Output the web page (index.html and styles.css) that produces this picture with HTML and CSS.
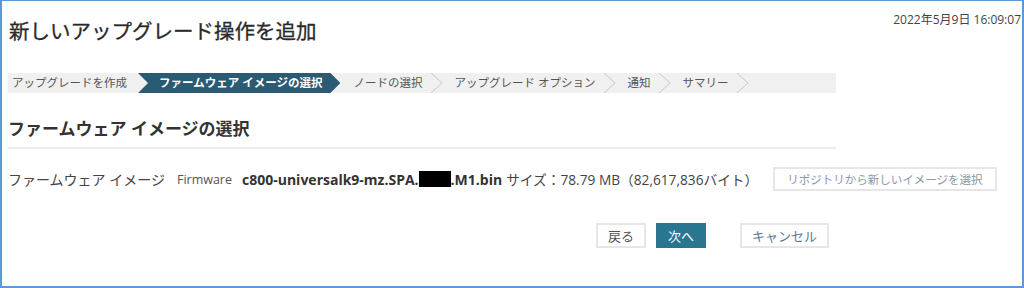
FILE: index.html
```html
<!DOCTYPE html>
<html lang="ja">
<head>
    <meta charset="UTF-8">
    <title>新しいアップグレード操作を追加</title>
    <link rel="stylesheet" href="styles.css">
</head>
<body>
    <div class="frame">
        <div class="header">
            <h1>新しいアップグレード操作を追加</h1>
            <div class="timestamp">2022年5月9日 16:09:07</div>
        </div>

        <div class="main">
            <div class="steps">
                <span class="step first">アップグレードを作成</span>
                <span class="step active">ファームウェア イメージの選択</span>
                <span class="step">ノードの選択</span>
                <svg class="sep" viewBox="0 0 11 20"><polyline points="0,0 11,10 0,20"/></svg>
                <span class="step">アップグレード オプション</span>
                <svg class="sep" viewBox="0 0 11 20"><polyline points="0,0 11,10 0,20"/></svg>
                <span class="step">通知</span>
                <svg class="sep" viewBox="0 0 11 20"><polyline points="0,0 11,10 0,20"/></svg>
                <span class="step">サマリー</span>
                <svg class="sep" viewBox="0 0 11 20"><polyline points="0,0 11,10 0,20"/></svg>
            </div>

            <h2 class="section-title">ファームウェア イメージの選択</h2>

            <div class="field-row">
                <span class="field-label">ファームウェア イメージ</span>
                <span class="fw-tag">Firmware</span>
                <span class="fw-name">c800-universalk9-mz.SPA.<span class="redacted"></span>.M1.bin</span>
                <span class="fw-size">サイズ：78.79 MB（82,617,836バイト）</span>
                <button class="btn btn-repo">リポジトリから新しいイメージを選択</button>
            </div>

            <div class="actions">
                <button class="btn">戻る</button>
                <button class="btn btn-primary">次へ</button>
                <button class="btn btn-cancel">キャンセル</button>
            </div>
        </div>
    </div>
</body>
</html>
```

FILE: styles.css
```css
body {
    margin: 0;
    font-family: "Open Sans", "Noto Sans CJK JP", sans-serif;
    color: #444;
    background-color: white;
}

.frame {
    width: 1024px;
    height: 288px;
    box-sizing: border-box;
    border: 2px solid #5b9bd5;
    border-top-width: 1px;
    overflow: hidden;
}

.header {
    display: flex;
    justify-content: space-between;
    align-items: flex-start;
    padding: 0 1px 0 7px;
}

h1 {
    margin: 16px 0 0 0;
    font-size: 20.5px;
    line-height: 28px;
    font-weight: normal;
    color: #2a2a2a;
    -webkit-text-stroke: 0.3px #2a2a2a;
}

.timestamp {
    margin-top: 11px;
    font-size: 12px;
    line-height: 16px;
    color: #444;
}

.main {
    width: 828px;
    margin-left: 6px;
}

/* wizard breadcrumb */
.steps {
    margin-top: 28px;
    height: 20px;
    display: flex;
    align-items: center;
    background-color: #f0f0f0;
    font-size: 11.5px;
    color: #555;
}

.step {
    line-height: 20px;
    padding: 0 9px 0 12px;
    white-space: nowrap;
}

.step.first {
    padding: 0 11px 0 4px;
}

.step.active {
    padding: 0 18px 0 21px;
    background-color: #2b5a73;
    color: white;
    font-weight: bold;
    clip-path: polygon(0 0, calc(100% - 10px) 0, 100% 50%, calc(100% - 10px) 100%, 0 100%, 10px 50%);
}

.step.active + .step {
    padding-left: 13px;
}

.sep {
    width: 11px;
    height: 20px;
    flex-shrink: 0;
}

.sep polyline {
    fill: none;
    stroke: #c8c8c8;
    stroke-width: 1;
}

.section-title {
    margin: 24px 0 0 0;
    padding-bottom: 6px;
    border-bottom: 2px solid #ececec;
    font-size: 17px;
    line-height: 24px;
    color: #333;
}

.field-row {
    margin-top: 18px;
    height: 24px;
    display: flex;
    align-items: center;
    white-space: nowrap;
}

.field-label {
    font-size: 14px;
    color: #444;
}

.fw-tag {
    margin-left: 12px;
    font-size: 12.5px;
    color: #555;
}

.fw-name {
    margin-left: 10px;
    font-size: 14px;
    font-weight: bold;
    color: #333;
    display: flex;
    align-items: center;
}

.redacted {
    display: inline-block;
    width: 32px;
    height: 16px;
    background-color: black;
}

.fw-size {
    margin-left: 4px;
    font-size: 13.7px;
    color: #444;
}

.btn {
    height: 25px;
    padding: 0 10px;
    border: 2px solid #e6e6e6;
    background-color: white;
    font-family: inherit;
    font-size: 13px;
    color: #555;
    cursor: pointer;
}

.btn-repo {
    margin-left: 15px;
    height: 24px;
    padding: 0 12px;
    font-size: 11.5px;
    color: #8a98a6;
}

.actions {
    margin-top: 32px;
    padding-right: 7px;
    display: flex;
    justify-content: flex-end;
    gap: 10px;
}

.btn-primary {
    background-color: #2a7590;
    border-color: #2a7590;
    color: white;
}

.btn-cancel {
    margin-left: 24px;
    color: #5d7b90;
}
```
